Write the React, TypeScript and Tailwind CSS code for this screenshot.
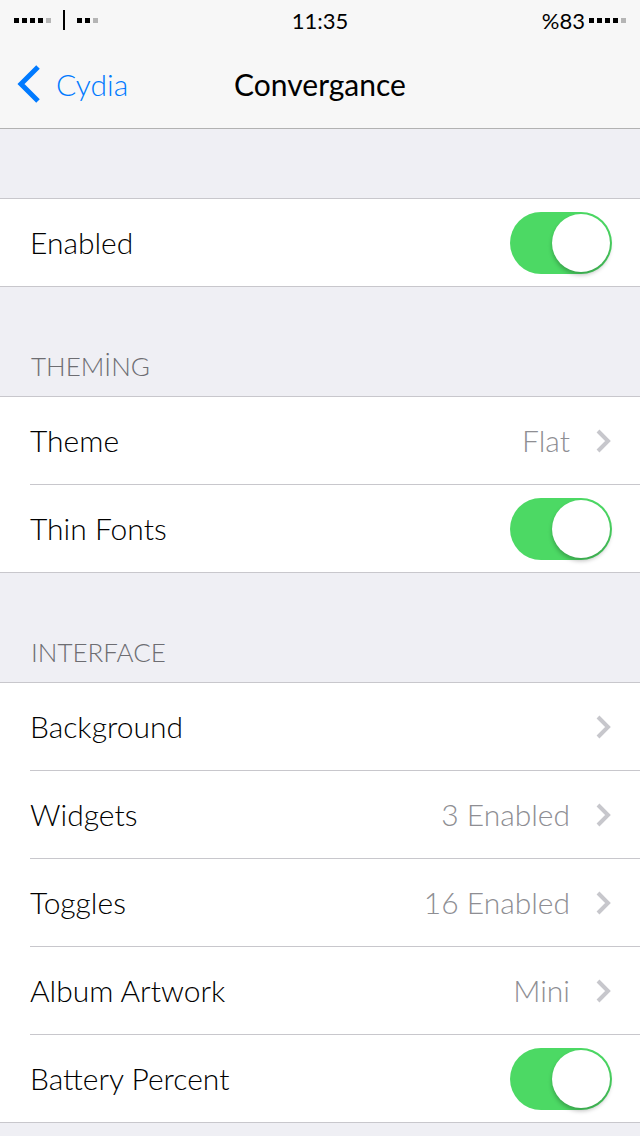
const font = { fontFamily: 'Lato, "Open Sans", sans-serif' };

function Dots({ filled, total }: { filled: number; total: number }) {
  return (
    <div className="flex items-center gap-[3px]">
      {Array.from({ length: total }).map((_, i) => (
        <span key={i} className={i < filled ? 'w-[5px] h-[5px] bg-black' : 'w-[5px] h-[5px] bg-[#b5b5b5]'} />
      ))}
    </div>
  );
}

function Toggle() {
  return (
    <div className="w-[102px] h-[62px] rounded-full bg-[#4cd964] relative">
      <div className="absolute right-[2px] top-[2px] w-[58px] h-[58px] rounded-full bg-white shadow-[0_3px_4px_rgba(0,0,0,0.25)]" />
    </div>
  );
}

function Chevron() {
  return (
    <svg width="16" height="26" viewBox="0 0 16 26" className="-mr-[1px]">
      <path d="M3 3 L13 13 L3 23" fill="none" stroke="#c7c7cc" strokeWidth="4" />
    </svg>
  );
}

function Row({ label, value, toggle, chevron, last }: { label: string; value?: string; toggle?: boolean; chevron?: boolean; last?: boolean }) {
  return (
    <div className="pl-[30px] bg-white">
      <div className={last ? 'h-[87px] flex items-center pr-[30px]' : 'h-[88px] flex items-center pr-[30px] border-b border-[#c8c7cc]'}>
        <span className="flex-1 text-[30px] font-light text-black">{label}</span>
        {value && <span className="text-[30px] font-light text-[#8e8e93] mr-[25px]">{value}</span>}
        {chevron && <Chevron />}
        {toggle && <div className="-mr-[2px]"><Toggle /></div>}
      </div>
    </div>
  );
}

function Group({ children }: { children: React.ReactNode }) {
  return <div className="border-y border-[#c8c7cc] bg-white">{children}</div>;
}

function Header({ title }: { title: string }) {
  return (
    <div className="h-[109px] flex items-end pl-[31px] pb-[10px]">
      <span className="text-[26px] font-light text-[#6d6d72] uppercase">{title}</span>
    </div>
  );
}

export default function App() {
  return (
    <div className="w-[640px] h-[1136px] bg-[#efeff4] overflow-hidden" style={font}>
      <div className="bg-[#f7f7f7] border-b border-[#b2b2b2]">
        <div className="h-[40px] flex items-center px-[14px] relative">
          <div className="flex items-center gap-[12px]">
            <Dots filled={4} total={5} />
            <span className="w-[1.5px] h-[20px] bg-black" />
            <Dots filled={2} total={3} />
          </div>
          <span className="absolute left-1/2 -translate-x-1/2 text-[22px] text-black">11:35</span>
          <div className="ml-auto flex items-center gap-[4px]">
            <span className="text-[22px] text-black">%83</span>
            <Dots filled={4} total={5} />
          </div>
        </div>
        <div className="h-[88px] flex items-center relative">
          <div className="flex items-center pl-[16px] gap-[14px] text-[#007aff]">
            <svg width="26" height="40" viewBox="0 0 26 40">
              <path d="M22 3 L5 20 L22 37" fill="none" stroke="#007aff" strokeWidth="5" />
            </svg>
            <span className="text-[30px] font-light">Cydia</span>
          </div>
          <span className="absolute left-1/2 -translate-x-1/2 text-[30px] font-normal text-black">Convergance</span>
        </div>
      </div>

      <div className="h-[69px]" />
      <Group>
        <Row label="Enabled" toggle last />
      </Group>

      <Header title="Themİng" />
      <Group>
        <Row label="Theme" value="Flat" chevron />
        <Row label="Thin Fonts" toggle last />
      </Group>

      <Header title="Interface" />
      <Group>
        <Row label="Background" chevron />
        <Row label="Widgets" value="3 Enabled" chevron />
        <Row label="Toggles" value="16 Enabled" chevron />
        <Row label="Album Artwork" value="Mini" chevron />
        <Row label="Battery Percent" toggle last />
      </Group>
    </div>
  );
}
